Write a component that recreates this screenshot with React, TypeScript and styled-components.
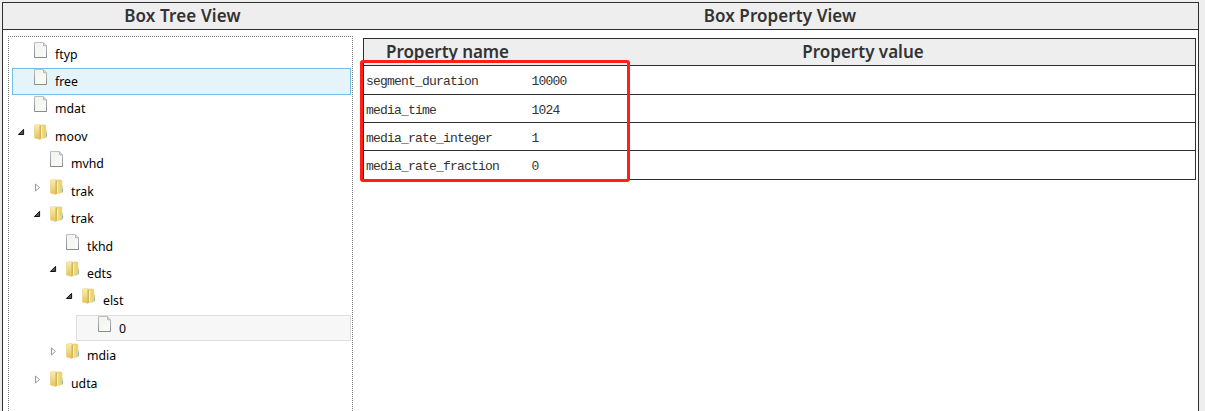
import React from "react";
import styled, { createGlobalStyle, css } from "styled-components";

const GlobalStyle = createGlobalStyle`
  * { box-sizing: border-box; }
  html, body { margin: 0; height: 411px; overflow: hidden; background: #eee; }
`;

const Page = styled.div`
  height: 411px;
  overflow: hidden;
  padding: 2px 6px 0 2px;
  background: #eee;
`;

const Frame = styled.div`
  display: flex;
  flex-direction: column;
  height: 440px;
  border: 1px solid #2e2e30;
  background: #fff;
`;

const Header = styled.div<{ $columns: string }>`
  display: grid;
  grid-template-columns: ${(p) => p.$columns};
  flex: none;
  height: 27px;
  border-bottom: 1px solid #2e2e30;
  background: #eee;
`;

const Heading = styled.div`
  font: 600 17px/26px "Trebuchet MS", "Noto Sans", sans-serif;
  color: #333;
  text-align: center;
  white-space: nowrap;
`;

const HeadingText = styled.span<{ $tracking: number }>`
  letter-spacing: ${(p) => p.$tracking}px;
`;

const Columns = styled.div`
  display: grid;
  grid-template-columns: 345px 833px;
  column-gap: 10px;
  flex: 1;
  padding-left: 5px;
`;

const Tree = styled.div`
  margin-top: 6px;
  padding: 3.6px 1px 0 3px;
  border: 1px dotted #777;
`;

const Node = styled.div<{ $level: number; $state?: "hover" | "selected" }>`
  display: flex;
  align-items: flex-start;
  height: 27.43px;
  margin-left: ${(p) => p.$level * 16}px;
  border: 1px solid transparent;
  ${(p) => p.$state === "hover" && css`
    border-color: #70c0e7;
    background: #e5f3fb;
  `}
  ${(p) => p.$state === "selected" && css`
    border-color: #dedede;
    background: #f7f7f7;
    height: 26.43px;
    margin-bottom: 1px;
  `}
`;

const Toggle = styled.span`
  width: 21px;
  height: 20px;
  padding: 4px 0 0 4px;
  svg { display: block; }
`;

const IconBox = styled.span`
  width: 16px;
  height: 16px;
  margin-right: 5px;
  svg { display: block; }
`;

const Label = styled.span`
  font: 12.3px/25px "Noto Sans", sans-serif;
  color: #000;
`;

const Properties = styled.div`
  position: relative;
  align-self: start;
  margin-top: 8px;
  border: 1px solid #2e2e30;
`;

const Property = styled.div<{ $height: number }>`
  display: grid;
  grid-template-columns: 165.5px 1fr;
  height: ${(p) => p.$height}px;
  padding-left: 2px;
  font: 13px/32px "Liberation Mono", monospace;
  letter-spacing: -0.8px;
  color: #333;
  & + & { border-top: 1px solid #2e2e30; line-height: 31px; }
`;

const Highlight = styled.div`
  position: absolute;
  left: -4px;
  top: 21px;
  width: 270px;
  height: 122px;
  border: 3px solid #ff1f17;
  border-radius: 3px;
`;

const FileIcon = () => (
  <svg width="16" height="17" viewBox="0 0 16 17">
    <defs>
      <linearGradient id="paper" x1="0" y1="0" x2="1" y2="1">
        <stop offset="0" stopColor="#f1f3ee" />
        <stop offset="1" stopColor="#fafcf8" />
      </linearGradient>
      <linearGradient id="edge" x1="0" y1="0" x2="0" y2="1">
        <stop offset="0" stopColor="#c0c0c0" />
        <stop offset="1" stopColor="#8a8a8a" />
      </linearGradient>
    </defs>
    <path d="M.5.5h9l3 3v12H.5z" fill="url(#paper)" stroke="url(#edge)" />
    <path d="M9.5.8v3h3" fill="#e4e4e4" stroke="#b5b5b5" />
  </svg>
);

const FolderIcon = () => (
  <svg width="16" height="17" viewBox="0 0 16 17">
    <defs>
      <linearGradient id="folder" x1="0" y1="0" x2="1" y2="0">
        <stop offset="0" stopColor="#f8eca4" />
        <stop offset="1" stopColor="#e8cb64" />
      </linearGradient>
      <linearGradient id="leaf" x1="0" y1="0" x2="0" y2="1">
        <stop offset="0" stopColor="#faf0ad" />
        <stop offset="1" stopColor="#e3c258" />
      </linearGradient>
    </defs>
    <path d="M5 1h6.2l.6.6v12.2L5 14.8z" fill="url(#folder)" stroke="#e3cb78" strokeWidth=".6" />
    <path d="M10.8 6.8h2.2v6.4l-2.2.6z" fill="#ecd37a" />
    <path d="M12 9.5h1v3.3h-1z" fill="#79bcd4" />
    <path d="M.4 1.2 4.8.4l1.3.8v14.2L.4 14z" fill="url(#leaf)" stroke="#e4cd7c" strokeWidth=".6" />
    <path d="M5.5 2 7 1.6v12.8l-1.5.9z" fill="#d2b45a" />
    <path d="M7.5 3v10.5" stroke="#fff3ac" />
  </svg>
);

const Arrow = ({ open }: { open: boolean }) => (
  <svg width="9" height="10" viewBox="0 0 9 10">
    {open ? (
      <path d="M6.6 1.3v5.2H1.4z" fill="#555" stroke="#111" />
    ) : (
      <path d="M2.5 1v7l4-3.5z" fill="#fff" stroke="#999" />
    )}
  </svg>
);

type NodeData = { name: string; level: number; open?: boolean; state?: "hover" | "selected" };

const nodes: NodeData[] = [
  { name: "ftyp", level: 0 },
  { name: "free", level: 0, state: "hover" },
  { name: "mdat", level: 0 },
  { name: "moov", level: 0, open: true },
  { name: "mvhd", level: 1 },
  { name: "trak", level: 1, open: false },
  { name: "trak", level: 1, open: true },
  { name: "tkhd", level: 2 },
  { name: "edts", level: 2, open: true },
  { name: "elst", level: 3, open: true },
  { name: "0", level: 4, state: "selected" },
  { name: "mdia", level: 2, open: false },
  { name: "udta", level: 1, open: false },
];

const properties = [
  { name: "segment_duration", value: "10000", height: 28 },
  { name: "media_time", value: "1024", height: 28 },
  { name: "media_rate_integer", value: "1", height: 28 },
  { name: "media_rate_fraction", value: "0", height: 29 },
];

export default function App() {
  return (
    <>
      <GlobalStyle />
      <Page>
        <Frame>
          <Header $columns="359px 1fr">
            <Heading><HeadingText $tracking={0.15}>Box Tree View</HeadingText></Heading>
            <Heading><HeadingText $tracking={0.08}>Box Property View</HeadingText></Heading>
          </Header>
          <Columns>
            <Tree>
              {nodes.map((n, i) => (
                <Node key={i} $level={n.level} $state={n.state}>
                  <Toggle>{n.open !== undefined && <Arrow open={n.open} />}</Toggle>
                  <IconBox>{n.open === undefined ? <FileIcon /> : <FolderIcon />}</IconBox>
                  <Label>{n.name}</Label>
                </Node>
              ))}
            </Tree>
            <Properties>
              <Header $columns="167px 1fr">
                <Heading><HeadingText $tracking={-0.05}>Property name</HeadingText></Heading>
                <Heading><HeadingText $tracking={0}>Property value</HeadingText></Heading>
              </Header>
              {properties.map((p) => (
                <Property key={p.name} $height={p.height}>
                  <span>{p.name}</span>
                  <span>{p.value}</span>
                </Property>
              ))}
              <Highlight />
            </Properties>
          </Columns>
        </Frame>
      </Page>
    </>
  );
}
